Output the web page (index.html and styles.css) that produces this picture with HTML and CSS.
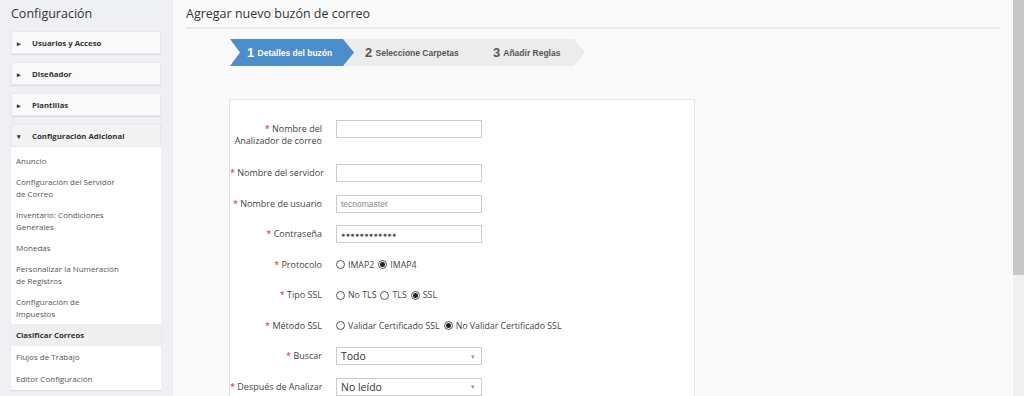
FILE: index.html
```html
<!DOCTYPE html>
<html>
<head>
    <title>Agregar nuevo buzón de correo</title>
    <link rel="stylesheet" href="styles.css">
</head>
<body>
    <div class="sidebar">
        <h2 class="side-title">Configuración</h2>
        <div class="panel"><div class="panel-head"><span class="tri">&#9656;</span>Usuarios y Acceso</div></div>
        <div class="panel"><div class="panel-head"><span class="tri">&#9656;</span>Diseñador</div></div>
        <div class="panel"><div class="panel-head"><span class="tri">&#9656;</span>Plantillas</div></div>
        <div class="panel open">
            <div class="panel-head"><span class="tri">&#9662;</span>Configuración Adicional</div>
            <ul class="panel-list">
                <li>Anuncio</li>
                <li>Configuración del Servidor<br>de Correo</li>
                <li>Inventario: Condiciones<br>Generales</li>
                <li>Monedas</li>
                <li>Personalizar la Numeración<br>de Registros</li>
                <li>Configuración de<br>Impuestos</li>
                <li class="group">Clasificar Correos</li>
                <li class="after">Flujos de Trabajo</li>
                <li class="after">Editor Configuración</li>
            </ul>
        </div>
    </div>

    <div class="main">
        <h1 class="page-title">Agregar nuevo buzón de correo</h1>

        <div class="steps">
            <div class="step active step-1"><b>1</b> Detalles del buzón</div>
            <div class="step step-2"><b>2</b> Seleccione Carpetas</div>
            <div class="step step-3"><b>3</b> Añadir Reglas</div>
        </div>

        <div class="form-box">
            <div class="row tall">
                <label class="lbl"><span class="req">*</span> Nombre del<br>Analizador de correo</label>
                <div class="field"></div>
            </div>
            <div class="row">
                <label class="lbl"><span class="req">*</span> Nombre del servidor</label>
                <div class="field"></div>
            </div>
            <div class="row">
                <label class="lbl"><span class="req">*</span> Nombre de usuario</label>
                <div class="field"><span class="value muted">tecnomaster</span></div>
            </div>
            <div class="row">
                <label class="lbl"><span class="req">*</span> Contraseña</label>
                <div class="field"><span class="value dots">●●●●●●●●●●●●</span></div>
            </div>
            <div class="row">
                <label class="lbl"><span class="req">*</span> Protocolo</label>
                <div class="radios">
                    <span class="radio"></span>IMAP2
                    <span class="radio checked"></span>IMAP4
                </div>
            </div>
            <div class="row">
                <label class="lbl"><span class="req">*</span> Tipo SSL</label>
                <div class="radios">
                    <span class="radio"></span>No TLS
                    <span class="radio"></span>TLS
                    <span class="radio checked"></span>SSL
                </div>
            </div>
            <div class="row">
                <label class="lbl"><span class="req">*</span> Método SSL</label>
                <div class="radios">
                    <span class="radio"></span>Validar Certificado SSL
                    <span class="radio checked"></span>No Validar Certificado SSL
                </div>
            </div>
            <div class="row">
                <label class="lbl"><span class="req">*</span> Buscar</label>
                <div class="field select"><span>Todo</span><span class="caret">&#9662;</span></div>
            </div>
            <div class="row">
                <label class="lbl"><span class="req">*</span> Después de Analizar</label>
                <div class="field select"><span>No leído</span><span class="caret">&#9662;</span></div>
            </div>
        </div>
    </div>

    <div class="scrollbar"><div class="thumb"></div></div>
</body>
</html>
```

FILE: styles.css
```css
html, body {
    margin: 0;
    height: 396px;
    overflow: hidden;
}

body {
    display: flex;
    font-family: "Open Sans", "Liberation Sans", sans-serif;
    color: #333;
    background-color: #fafafa;
}

/* sidebar */

.sidebar {
    width: 172px;
    flex-shrink: 0;
    background-color: #eff0f3;
    padding: 0 11px;
    box-sizing: border-box;
}

.side-title {
    margin: 0;
    padding: 4px 0 7px;
    font-size: 12.5px;
    font-weight: normal;
    line-height: 20px;
    color: #333;
}

.panel {
    background-color: #fff;
    margin-bottom: 8px;
    box-shadow: 0 1px 1px rgba(0, 0, 0, 0.08);
}

.panel-head {
    height: 23px;
    line-height: 23px;
    background-color: #f9f9f9;
    border: 1px solid #e9e9e9;
    box-sizing: border-box;
    font-size: 7.8px;
    font-weight: bold;
    color: #333;
    padding-left: 5px;
}

.open .panel-head {
    background-color: #f3f3f4;
}

.tri {
    display: inline-block;
    width: 15px;
    font-size: 7px;
    color: #333;
}

.panel-list {
    list-style: none;
    margin: 0;
    padding: 3px 0 0;
}

.panel-list li {
    font-size: 8px;
    line-height: 12px;
    color: #555;
    padding: 5px 5px 4px;
}

.panel-list li.group {
    background-color: #eeeff1;
    font-weight: bold;
    font-size: 7.8px;
    color: #333;
    padding: 5px 5px 5px;
}

.panel-list li.after {
    padding-bottom: 5px;
}

/* main */

.main {
    flex: 1;
    padding: 0 12px 0 13px;
    background-color: #fafafa;
    border-left: 1px solid #e8e9ee;
}

.page-title {
    margin: 0;
    font-size: 12.5px;
    font-weight: normal;
    line-height: 20px;
    padding: 4px 0 3px;
    color: #333;
    border-bottom: 2px solid #e9e9e9;
}

.steps {
    display: flex;
    margin: 10px 0 0 44px;
    height: 27px;
}

.step {
    height: 27px;
    line-height: 27px;
    font-family: "Liberation Sans", Arial, sans-serif;
    font-size: 8.5px;
    font-weight: bold;
    color: #555;
    background-color: #ececec;
    clip-path: polygon(0 0, calc(100% - 11px) 0, 100% 50%, calc(100% - 11px) 100%, 0 100%, 11px 50%);
    box-sizing: border-box;
    margin-left: -12px;
}

.step b {
    font-size: 13px;
    margin-right: 1px;
    vertical-align: -1px;
}

.step-1 {
    width: 125px;
    margin-left: 0;
    padding-left: 17px;
    clip-path: polygon(0 0, calc(100% - 11px) 0, 100% 50%, calc(100% - 11px) 100%, 0 100%, 10px 50%);
}

.step-2 {
    width: 142px;
    padding-left: 22px;
}

.step-3 {
    width: 112px;
    padding-left: 20px;
}

.step.active {
    background-color: #4c8dcb;
    color: #fff;
}

.form-box {
    width: 466px;
    margin: 33px 0 0 43px;
    background-color: #fff;
    border: 1px solid #e4e4e4;
    box-sizing: border-box;
    padding-top: 20px;
    height: 400px;
}

.row {
    display: flex;
    align-items: flex-start;
    margin-bottom: 12.5px;
}

.row.tall {
    margin-bottom: 17px;
    height: 27px;
}

.lbl {
    width: 92px;
    flex-shrink: 0;
    text-align: right;
    font-size: 9px;
    line-height: 12px;
    padding-top: 3px;
    color: #444;
    margin-right: 14px;
    white-space: nowrap;
}

.tall .lbl {
    padding-top: 3px;
}

.req {
    color: #c9302c;
}

.field {
    width: 146px;
    height: 18px;
    border: 1px solid #ccc;
    box-sizing: border-box;
    background-color: #fff;
    display: flex;
    align-items: center;
    padding-left: 4px;
}

.value {
    font-family: "Liberation Sans", Arial, sans-serif;
    font-size: 8.5px;
}

.muted {
    color: #888;
}

.dots {
    font-size: 7px;
    color: #555;
    letter-spacing: 0.4px;
}

.select {
    justify-content: space-between;
    font-size: 10.5px;
    color: #333;
    padding-right: 6px;
}

.caret {
    font-size: 7px;
    color: #999;
}

.radios {
    height: 18px;
    display: flex;
    align-items: center;
    font-size: 8.8px;
    color: #444;
}

.radio {
    width: 9px;
    height: 9px;
    border: 1px solid #555;
    border-radius: 50%;
    box-sizing: border-box;
    margin: 0 3px 0 4px;
    display: inline-flex;
    align-items: center;
    justify-content: center;
    background-color: #fff;
}

.radio:first-child {
    margin-left: 0;
}

.radio.checked::after {
    content: "";
    width: 5px;
    height: 5px;
    border-radius: 50%;
    background-color: #222;
}

/* fake browser scrollbar */

.scrollbar {
    width: 11px;
    flex-shrink: 0;
    background-color: #f0f0f0;
    border-left: 1px solid #fff;
}

.thumb {
    height: 275px;
    background-color: #c8c8c8;
}
```
